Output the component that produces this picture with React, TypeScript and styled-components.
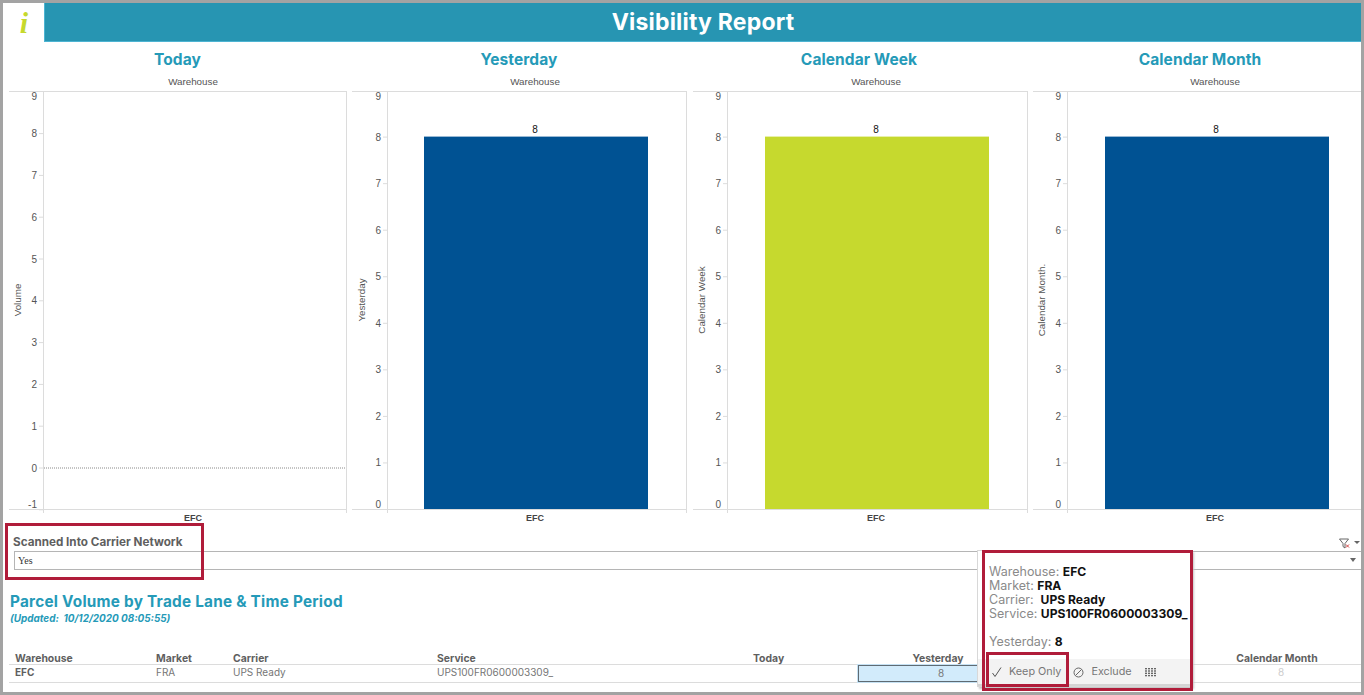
import React from "react";
import styled, { createGlobalStyle } from "styled-components";

const Global = createGlobalStyle`
  html, body { margin: 0; padding: 0; background: #fff; }
  #root { width: 1364px; height: 695px; }
`;
const SANS = `Inter, "Open Sans", "Liberation Sans", sans-serif`;
const ARIAL = `"Liberation Sans", Arial, sans-serif`;

const Page = styled.div`
  position: relative; box-sizing: border-box; width: 1364px; height: 695px;
  border: 3px solid #a3a3a3;
  background: #fff; overflow: hidden; font-family: ${SANS};
`;
const Header = styled.header`display: flex; height: 39px;`;
const LogoBox = styled.div`
  width: 41px; display: flex; align-items: center; justify-content: center; box-sizing: border-box;
  font: italic bold 30px "Liberation Serif", serif; color: #c6d92d; padding: 0 0 0 1px;
`;
const TitleBar = styled.h1`
  flex: 1; margin: 0; background: #2795b2; border-bottom: 1px solid #4db4d2; border-left: 1px solid #4db4d2;
  color: #fff; font: 700 23px/38px ${SANS}; text-align: center; letter-spacing: .2px;
`;
const Columns = styled.div`
  display: grid; grid-template-columns: 349px 334px 346px 329px;
`;
const ColTitle = styled.h2<{ $pad: number }>`
  margin: 0; height: 37px; padding: 7px 0 0 ${p => p.$pad}px; box-sizing: border-box;
  color: #259ab8; font: 700 15.5px/22px ${SANS}; text-align: center; letter-spacing: .1px;
`;
const ChartRow = styled.div`display: flex; height: 444px; padding-left: 6px;`;
const ChartSvg = styled.svg`display: block; flex: none; overflow: visible;`;
const FilterRow = styled.section`
  height: 58px; padding: 0 0 0 10px; box-sizing: border-box; position: relative;
`;
const FilterLabel = styled.div`
  font: 700 11.7px/13px ${SANS}; color: #5f5f5f; padding-top: 13px; height: 28px; box-sizing: border-box;
`;
const Select = styled.div`
  height: 19px; margin-left: 1px; border: 1px solid #b5b5b5; border-right: 0; box-sizing: border-box;
  font: 10px/18px "Liberation Serif", serif; color: #333; padding-left: 3px; position: relative;
`;
const Caret = styled.span`
  position: absolute; right: 5px; top: 6px; width: 0; height: 0;
  border: 3.5px solid transparent; border-top: 4px solid #666; border-bottom: 0;
`;
const FilterIcon = styled.svg`position: absolute; right: 0; top: 15px;`;
const Section = styled.section`padding: 0 0 0 6px;`;
const SectionTitle = styled.h3`
  margin: 0 0 0 1px; padding-top: 11px; color: #259ab8; font: 700 15.3px/20px ${SANS}; letter-spacing: .25px;
`;
const Updated = styled.div`
  margin-left: 1px; font: italic 700 9.95px/13px ${SANS}; color: #259ab8;
`;
const Table = styled.div`margin-top: 25px; font-size: 10.4px;`;
const TableRow = styled.div<{ $head?: boolean }>`
  display: grid; grid-template-columns: 141px 77px 204px 316px 111px 160px 175px 1fr;
  height: ${p => (p.$head ? 15 : 18)}px; border-bottom: 1px solid #dcdcdc; box-sizing: border-box;
  line-height: ${p => (p.$head ? 17 : 15)}px; font-weight: ${p => (p.$head ? 700 : 400)};
  font-size: ${p => (p.$head ? 10.4 : 10)}px;
  color: ${p => (p.$head ? "#5f5f5f" : "#767676")};
  & > * { padding-left: 6px; }
`;
const Bold = styled.span`font-weight: 700; color: #5f5f5f;`;
const Center = styled.span`text-align: center; padding-left: 0 !important;`;
const Selected = styled.span`
  text-align: center; background: #d2ebfb; border: 1px solid #5f6b73; box-sizing: border-box; color: #777;
  padding-left: 6px !important; height: 17px; line-height: 14px; box-shadow: 0 0 0 1px #c5e1f3;
`;
const Faint = styled.span`text-align: center; color: #ccc; padding-left: 8px !important;`;
const Tooltip = styled.div`
  position: absolute; left: 974px; top: 547px; width: 215px; height: 137px; box-sizing: border-box;
  background: #fff; border: 1px solid #d8d8d8; box-shadow: 2px 2px 2px #c4c4c4;
  font-size: 12.5px; line-height: 14px; color: #8a8a8a; display: flex; flex-direction: column;
`;
const TipBody = styled.div`padding: 14px 0 0 11px; flex: 1;`;
const TipLine = styled.div<{ $gap?: boolean }>`margin-top: ${p => (p.$gap ? 14 : 0)}px; white-space: nowrap;`;
const TipValue = styled.b`color: #111; font-weight: 700; font-size: 12.1px;`;
const TipActions = styled.div`
  height: 25px; background: #f3f3f3; display: flex; align-items: center; padding: 1px 0 0 13px; box-sizing: border-box;
  font-size: 10.8px; color: #777; border-bottom: 2px solid #d4d4d4; flex: none; height: 27px;
`;
const Action = styled.span`display: inline-flex; align-items: center; gap: 6px; margin-right: 12px;`;
const ExcludeAction = styled(Action)`gap: 7px; margin-right: 13px;`;
const Mark = styled.div<{ $l: number; $t: number; $w: number; $h: number }>`
  position: absolute; left: ${p => p.$l}px; top: ${p => p.$t}px; width: ${p => p.$w}px; height: ${p => p.$h}px;
  box-sizing: border-box; border: 3px solid #b01c3a; pointer-events: none;
`;

type ChartProps = {
  width: number; plotRight: number | null; axis: number; label: string;
  value?: number; color?: string; center: number; negative?: boolean;
};

const Chart = ({ width, plotRight, axis, label, value, color, center, negative }: ChartProps) => {
  const top = 12, bottom = 430;
  const unit = negative ? 41.8 : 46.55;
  const zero = negative ? 388.5 : bottom;
  const y = (v: number) => zero - v * unit;
  const ticks = negative ? [9, 8, 7, 6, 5, 4, 3, 2, 1, 0, -1] : [9, 8, 7, 6, 5, 4, 3, 2, 1, 0];
  const right = plotRight ?? width;
  return (
    <ChartSvg width={width} height={444} viewBox={`0 0 ${width} 444`}>
      <text x={center} y={6} fontFamily={ARIAL} fontSize="9.8" fill="#555" textAnchor="middle">Warehouse</text>
      <line x1={0} x2={right} y1={top + .5} y2={top + .5} stroke="#dcdcdc" />
      <line x1={0} x2={right} y1={bottom + .5} y2={bottom + .5} stroke="#dcdcdc" />
      <line x1={axis + .5} x2={axis + .5} y1={top} y2={bottom + 4} stroke="#dcdcdc" />
      {plotRight !== null && <line x1={right + .5} x2={right + .5} y1={top} y2={bottom + 4} stroke="#dcdcdc" />}
      {ticks.map(t => {
        const ty = y(t);
        const ly = t === 9 ? top + 9 : ty + 4 + (ty + 4 > bottom - 2 ? -5.5 : 0);
        return (
          <g key={t}>
            {t !== 9 && <line x1={axis - 4} x2={axis} y1={ty + .5} y2={ty + .5} stroke="#dcdcdc" />}
            <text x={axis - 6} y={ly} fontFamily={ARIAL} fontSize="10" fill="#555" textAnchor="end">{t}</text>
          </g>
        );
      })}
      <text transform={`translate(${axis - 22},${(top + bottom) / 2}) rotate(-90)`} fontFamily={ARIAL} fontSize="9.8" fill="#555" textAnchor="middle">{label}</text>
      {negative && <line x1={axis + 1} x2={right} y1={zero + .5} y2={zero + .5} stroke="#8a8a8a" strokeDasharray="1 1" />}
      {value !== undefined && (
        <>
          <rect x={72} y={y(value)} width={224} height={bottom - y(value)} fill={color} />
          <text x={183} y={y(value) - 3.5} fontFamily={ARIAL} fontSize="10" fill="#111" textAnchor="middle">{value}</text>
        </>
      )}
      <text x={center} y={bottom + 12} fontFamily={ARIAL} fontSize="9" fontWeight="700" fill="#444" textAnchor="middle">EFC</text>
    </ChartSvg>
  );
};

export default function App() {
  return (
    <Page>
      <Global />
      <Header>
        <LogoBox>i</LogoBox>
        <TitleBar>Visibility Report</TitleBar>
      </Header>
      <Columns>
        <ColTitle $pad={0}>Today</ColTitle>
        <ColTitle $pad={0}>Yesterday</ColTitle>
        <ColTitle $pad={0}>Calendar Week</ColTitle>
        <ColTitle $pad={7}>Calendar Month</ColTitle>
      </Columns>
      <ChartRow>
        <Chart width={343} plotRight={337} axis={34} label="Volume" center={184} negative />
        <Chart width={341} plotRight={334} axis={35} label="Yesterday" value={8} color="#005293" center={183} />
        <Chart width={340} plotRight={334} axis={34} label="Calendar Week" value={8} color="#c6d92e" center={183} />
        <Chart width={328} plotRight={null} axis={34} label="Calendar Month." value={8} color="#005293" center={182} />
      </ChartRow>
      <FilterRow>
        <FilterLabel>Scanned Into Carrier Network</FilterLabel>
        <FilterIcon width="22" height="12" viewBox="0 0 22 12">
          <path d="M.5 1h9L6 5.5V10L4 8.5v-3z" fill="none" stroke="#666" strokeWidth="1" />
          <path d="M7 6.5l3 3M10 6.5l-3 3" stroke="#d04040" strokeWidth="1" />
          <path d="M15 3h6l-3 3z" fill="#666" />
        </FilterIcon>
        <Select>Yes<Caret /></Select>
      </FilterRow>
      <Section>
        <SectionTitle>Parcel Volume by Trade Lane &amp; Time Period</SectionTitle>
        <Updated>(Updated:&nbsp; 10/12/2020 08:05:55)</Updated>
        <Table>
          <TableRow $head>
            <span>Warehouse</span><span>Market</span><span>Carrier</span><span>Service</span>
            <span>Today</span><Center>Yesterday</Center><Center>Calendar Week</Center><Center>Calendar Month</Center>
          </TableRow>
          <TableRow>
            <Bold>EFC</Bold><span>FRA</span><span>UPS Ready</span><span>UPS100FR0600003309_</span>
            <span /><Selected>8</Selected><Center /><Faint>8</Faint>
          </TableRow>
        </Table>
      </Section>
      <Tooltip>
        <TipBody>
          <TipLine>Warehouse: <TipValue>EFC</TipValue></TipLine>
          <TipLine>Market: <TipValue>FRA</TipValue></TipLine>
          <TipLine>Carrier:&nbsp; <TipValue>UPS Ready</TipValue></TipLine>
          <TipLine>Service: <TipValue>UPS100FR0600003309_</TipValue></TipLine>
          <TipLine $gap>Yesterday: <TipValue>8</TipValue></TipLine>
        </TipBody>
        <TipActions>
          <Action>
            <svg width="12" height="12" viewBox="0 0 12 12"><path d="M1.5 7l2.5 3.5L10 1.5" fill="none" stroke="#555" strokeWidth="1" /></svg>
            Keep Only
          </Action>
          <ExcludeAction>
            <svg width="11" height="11" viewBox="0 0 11 11"><circle cx="5.5" cy="5.5" r="4.5" fill="none" stroke="#666" /><path d="M2.5 8.5l6-6" stroke="#666" /></svg>
            Exclude
          </ExcludeAction>
          <svg width="12" height="9" viewBox="0 0 12 9" fill="#666">
            {[0, 1, 2, 3].flatMap(c => [0, 1, 2, 3].map(r => <rect key={`${c}${r}`} x={c * 3} y={r * 2.3} width="2" height="1.4" />))}
          </svg>
        </TipActions>
      </Tooltip>
      <Mark $l={2} $t={520} $w={199} $h={57} />
      <Mark $l={979} $t={547} $w={211} $h={141} />
      <Mark $l={983} $t={649} $w={83} $h={35} />
    </Page>
  );
}
